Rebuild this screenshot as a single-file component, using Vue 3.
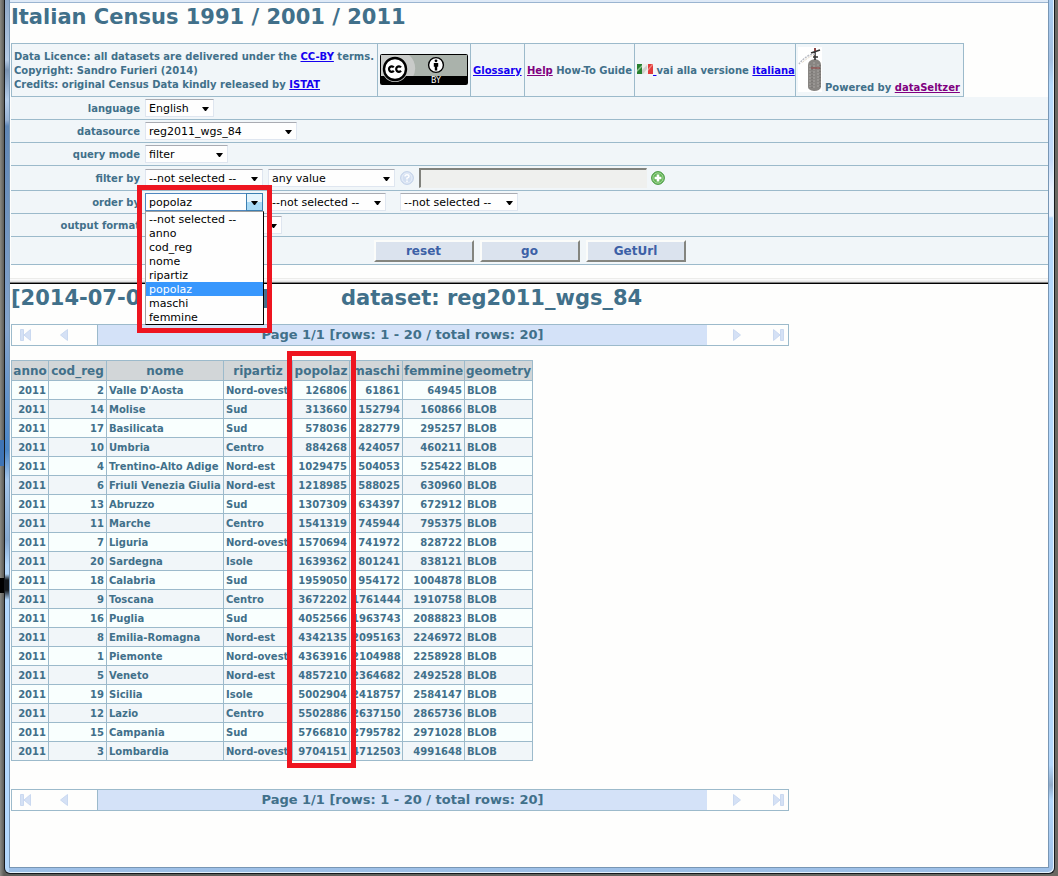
<script setup>
import { ref } from 'vue'

const fields = ['--not selected --', 'anno', 'cod_reg', 'nome', 'ripartiz', 'popolaz', 'maschi', 'femmine']
const orderBy = ref('popolaz')

const columns = ['anno', 'cod_reg', 'nome', 'ripartiz', 'popolaz', 'maschi', 'femmine', 'geometry']
const textColumns = ['nome', 'ripartiz', 'geometry']

const regions = [
  [2, "Valle D'Aosta", 'Nord-ovest', 126806, 61861, 64945],
  [14, 'Molise', 'Sud', 313660, 152794, 160866],
  [17, 'Basilicata', 'Sud', 578036, 282779, 295257],
  [10, 'Umbria', 'Centro', 884268, 424057, 460211],
  [4, 'Trentino-Alto Adige', 'Nord-est', 1029475, 504053, 525422],
  [6, 'Friuli Venezia Giulia', 'Nord-est', 1218985, 588025, 630960],
  [13, 'Abruzzo', 'Sud', 1307309, 634397, 672912],
  [11, 'Marche', 'Centro', 1541319, 745944, 795375],
  [7, 'Liguria', 'Nord-ovest', 1570694, 741972, 828722],
  [20, 'Sardegna', 'Isole', 1639362, 801241, 838121],
  [18, 'Calabria', 'Sud', 1959050, 954172, 1004878],
  [9, 'Toscana', 'Centro', 3672202, 1761444, 1910758],
  [16, 'Puglia', 'Sud', 4052566, 1963743, 2088823],
  [8, 'Emilia-Romagna', 'Nord-est', 4342135, 2095163, 2246972],
  [1, 'Piemonte', 'Nord-ovest', 4363916, 2104988, 2258928],
  [5, 'Veneto', 'Nord-est', 4857210, 2364682, 2492528],
  [19, 'Sicilia', 'Isole', 5002904, 2418757, 2584147],
  [12, 'Lazio', 'Centro', 5502886, 2637150, 2865736],
  [15, 'Campania', 'Sud', 5766810, 2795782, 2971028],
  [3, 'Lombardia', 'Nord-ovest', 9704151, 4712503, 4991648],
]
const rows = regions.map((r) => [2011, ...r, 'BLOB'])
</script>

<template>
  <div class="desktop">
    <div class="window">
      <div class="page">
        <div class="toolbar-edge"></div>
        <h1 class="title">Italian Census 1991 / 2001 / 2011</h1>

        <header class="info">
          <div class="cell licence">
            <p>Data Licence: all datasets are delivered under the <a href="#ccby">CC-BY</a> terms.</p>
            <p>Copyright: Sandro Furieri (2014)</p>
            <p>Credits: original Census Data kindly released by <a href="#istat">ISTAT</a></p>
          </div>
          <div class="cell badge-cell">
            <a href="#ccby" class="badge" aria-label="Creative Commons Attribution">
              <svg width="88" height="31" viewBox="0 0 88 31">
                <rect x="0.5" y="0.5" width="87" height="30" rx="1" fill="#aab2ab" stroke="#000" />
                <path d="M1 1H29A17 17 0 0 1 28 28H5L1 24Z" fill="#c9cbc9" />
                <path d="M1 22H87V30H1Z" fill="#000" />
                <path d="M4 22H26Q22 28 15 28T4 22Z" fill="#c9cbc9" />
                <circle cx="15" cy="15" r="11" fill="#fff" stroke="#000" stroke-width="2.4" />
                <path d="M13.8 13.4A2.7 2.7 0 1 0 13.8 16.8M21 13.4A2.7 2.7 0 1 0 21 16.8" fill="none" stroke="#000" stroke-width="2.2" />
                <circle cx="56" cy="11" r="7.4" fill="#fff" stroke="#000" stroke-width="1.4" />
                <circle cx="56" cy="6.8" r="1.4" fill="#000" />
                <path d="M53.8 9H58.2V12.8H57.2V16.4H54.8V12.8H53.8Z" fill="#000" />
                <text x="51" y="29" fill="#fff" font-size="8" font-weight="normal" font-family="DejaVu Sans, sans-serif">BY</text>
              </svg>
            </a>
          </div>
          <div class="cell glossary"><a href="#glossary">Glossary</a></div>
          <div class="cell help"><a href="#help" class="visited">Help</a>&nbsp;How-To Guide</div>
          <div class="cell italian">
            <a href="#italiana" class="flag" aria-label="italiana">
              <svg width="16" height="11" viewBox="0 0 16 11">
                <path d="M0 0H16V10H0Z" fill="#eeeeec" />
                <path d="M0 0H5V10H0Z" fill="#27802f" />
                <path d="M11 0H16V10H11Z" fill="#e23c3c" />
                <path d="M0 6L5 1V3L0 8Z" fill="#8fc08c" />
                <path d="M5 6L10 1V5L6 10H5Z" fill="#cfd0cc" />
                <path d="M11 5L15 0H16V1L11 7Z" fill="#f08880" />
              </svg>&nbsp;</a>vai alla versione&nbsp;<a href="#italiana">italiana</a>
          </div>
          <div class="cell powered">
            <svg width="24" height="45" viewBox="0 0 24 45">
              <path d="M0 0H24V45H0Z" fill="#fff" />
              <path d="M10 18Q10 13 17 12Q23 13 23 18V40Q22 44 16 44Q10 43 10 40Z" fill="#888582" />
              <path d="M12 18V40M16 15V42M20 17V40" stroke="#aaa7a4" stroke-dasharray="2 1" />
              <path d="M14 19V41M22 18V40" stroke="#6f6b69" stroke-dasharray="1 2" />
              <path d="M13 21H22" stroke="#923c3c" />
              <path d="M17 1V13M13 6L22 3M15 10H20" stroke="#333" stroke-width="1.6" fill="none" />
              <path d="M17 7Q9 7 1 17" stroke="#b9bcc4" stroke-width="1.5" fill="none" stroke-dasharray="2 1" />
              <path d="M16 8Q10 10 4 16" stroke="#d8c4a8" fill="none" stroke-dasharray="1 1" />
              <path d="M17 1V4" stroke="#b33" />
            </svg>
            <span>Powered by <a href="#dataseltzer" class="visited">dataSeltzer</a></span>
          </div>
        </header>

        <form class="query" @submit.prevent>
          <div class="row">
            <label for="language">language</label>
            <span class="picker w-language">
              <select id="language"><option>English</option></select>
              <svg width="7" height="4" viewBox="0 0 7 4"><path d="M0 0H7L4 4H3Z" /></svg>
            </span>
          </div>
          <div class="row">
            <label for="datasource">datasource</label>
            <span class="picker w-source">
              <select id="datasource"><option>reg2011_wgs_84</option></select>
              <svg width="7" height="4" viewBox="0 0 7 4"><path d="M0 0H7L4 4H3Z" /></svg>
            </span>
          </div>
          <div class="row">
            <label for="mode">query mode</label>
            <span class="picker w-mode">
              <select id="mode"><option>filter</option></select>
              <svg width="7" height="4" viewBox="0 0 7 4"><path d="M0 0H7L4 4H3Z" /></svg>
            </span>
          </div>
          <div class="row tall">
            <label for="filter">filter by</label>
            <span class="picker w-field">
              <select id="filter"><option v-for="f in fields" :key="f">{{ f }}</option></select>
              <svg width="7" height="4" viewBox="0 0 7 4"><path d="M0 0H7L4 4H3Z" /></svg>
            </span>
            <span class="picker w-value">
              <select aria-label="filter value"><option>any value</option></select>
              <svg width="7" height="4" viewBox="0 0 7 4"><path d="M0 0H7L4 4H3Z" /></svg>
            </span>
            <button type="button" class="round hint" aria-label="filter help">
              <svg width="14" height="14" viewBox="0 0 14 14">
                <circle cx="7" cy="7" r="6.4" fill="#d3dff1" stroke="#c3d2e9" />
                <circle cx="7" cy="7" r="5" fill="none" stroke="#e8eff9" />
                <path d="M5 5.6Q5 3.8 7 3.8T9 5.5Q9 6.5 7 7.2V8.4M7 9.4V11" fill="none" stroke="#fff" stroke-width="1.5" />
              </svg>
            </button>
            <input class="value" type="text" aria-label="filter text" disabled />
            <button type="button" class="round" aria-label="add filter">
              <svg width="14" height="14" viewBox="0 0 14 14">
                <circle cx="7" cy="7" r="6.4" fill="#62b455" stroke="#4a9a44" />
                <circle cx="7" cy="7" r="5.1" fill="none" stroke="#a5d79a" />
                <path d="M7 3.6V10.4M3.6 7H10.4" stroke="#fff" stroke-width="2.6" />
              </svg>
            </button>
          </div>
          <div class="row">
            <label for="order">order by</label>
            <span class="picker w-field open">
              <select id="order" v-model="orderBy"><option v-for="f in fields" :key="f">{{ f }}</option></select>
              <span class="drop"><svg width="7" height="4" viewBox="0 0 7 4"><path d="M0 0H7L4 4H3Z" /></svg></span>
              <ul class="options" role="listbox" aria-label="order by">
                <li v-for="f in fields" :key="f" role="option" :aria-selected="f === orderBy" :class="{ chosen: f === orderBy }" @click="orderBy = f">{{ f }}</li>
              </ul>
              <span class="highlight menu-highlight"></span>
            </span>
            <span class="picker w-field">
              <select aria-label="second order field"><option v-for="f in fields" :key="f">{{ f }}</option></select>
              <svg width="7" height="4" viewBox="0 0 7 4"><path d="M0 0H7L4 4H3Z" /></svg>
            </span>
            <span class="picker w-field third">
              <select aria-label="third order field"><option v-for="f in fields" :key="f">{{ f }}</option></select>
              <svg width="7" height="4" viewBox="0 0 7 4"><path d="M0 0H7L4 4H3Z" /></svg>
            </span>
          </div>
          <div class="row">
            <label for="format">output format</label>
            <span class="picker w-format">
              <select id="format"><option></option></select>
              <svg width="7" height="4" viewBox="0 0 7 4"><path d="M0 0H7L4 4H3Z" /></svg>
            </span>
          </div>
          <div class="row actions">
            <button type="reset">reset</button>
            <button type="submit">go</button>
            <button type="button">GetUrl</button>
          </div>
        </form>

        <div class="divider"></div>

        <main class="results">
          <h2 class="heading">
            <span class="stamp"><span>[2014-07-0</span><span>]</span></span>
            <span>dataset: reg2011_wgs_84</span>
          </h2>

          <template v-for="place in ['top', 'bottom']" :key="place">
            <nav class="pager" :aria-label="place + ' pages'">
              <div class="turn back">
                <button type="button" aria-label="first page">
                  <svg width="11" height="12" viewBox="0 0 11 12"><path d="M0.5 0.5H3.5V11.5H0.5Z" /><path d="M10.5 0.5V11.5L4 6Z" /></svg>
                </button>
                <button type="button" aria-label="previous page">
                  <svg width="8" height="12" viewBox="0 0 8 12"><path d="M7.5 0.5V11.5L0.5 6Z" /></svg>
                </button>
              </div>
              <div class="where">Page 1/1 [rows: 1 - 20 / total rows: 20]</div>
              <div class="turn next">
                <button type="button" aria-label="next page">
                  <svg width="8" height="12" viewBox="0 0 8 12"><path d="M0.5 0.5V11.5L7.5 6Z" /></svg>
                </button>
                <button type="button" aria-label="last page">
                  <svg width="11" height="12" viewBox="0 0 11 12"><path d="M7.5 0.5H10.5V11.5H7.5Z" /><path d="M0.5 0.5V11.5L7 6Z" /></svg>
                </button>
              </div>
            </nav>

            <div v-if="place === 'top'" class="data">
              <table>
                <colgroup><col v-for="c in columns" :key="c" :class="'c-' + c" /></colgroup>
                <thead>
                  <tr><th v-for="c in columns" :key="c" scope="col">{{ c }}</th></tr>
                </thead>
                <tbody>
                  <tr v-for="r in rows" :key="r[1]">
                    <td v-for="(v, i) in r" :key="i" :class="{ text: textColumns.includes(columns[i]) }">{{ v }}</td>
                  </tr>
                </tbody>
              </table>
              <span class="highlight column-highlight"></span>
            </div>
          </template>
        </main>
      </div>
    </div>
  </div>
</template>

<style>
body {
  margin: 0;
  background: #73726c;
}
</style>

<style scoped>
* {
  box-sizing: border-box;
}

.desktop {
  display: flex;
  min-height: 100vh;
  padding: 0 3px 2px 4px;
  background:
    linear-gradient(transparent 440px, #3f74b5 440px 466px, transparent 466px 578px, #000 578px 593px, transparent 593px) left / 4px 100% no-repeat,
    linear-gradient(90deg, #8a8a84 0, #5c5c58 4px, #6a6963 100%);
  font-family: Verdana, "DejaVu Sans", sans-serif;
  font-size: 10px;
  font-weight: bold;
  line-height: 14px;
  color: #41708a;
}

.window {
  display: flex;
  flex: 1;
  padding: 0 5px 5px 4px;
  border: 1px solid #16191d;
  border-top: 0;
  border-radius: 0 0 6px 6px;
  background:
    linear-gradient(#8fa9c8 0, #b5cae4 60px, #7a93b2 70px, #b4cdea 100px, #98b2d4 120px, #5f86b5 126px, #84a4cc 330px, #4a86c8 450px, #a5c6ea 480px, #86a9d0 540px, #b4d8fc 565px, #b4d8fc 574px, #14181c 580px, #14181c 590px, #b4d8fc 600px) left / 4px 100% no-repeat,
    linear-gradient(#a9cdf2 0, #a3bfe0 60px, #b4dafc 85px, #c4daf8 160px, #eaf2fe 190px, #eaf2fe 216px, #b4d8fc 218px, #b4d8fc 765px, #90abc8 785px, #b4d8fc 800px, #9dbfe6 100%);
  box-shadow: inset -1px -1px 0 #e6f2fc;
}

.page {
  flex: 1;
  min-width: 0;
  padding-left: 1px;
  border: 1px solid #7896b4;
  border-top: 0;
  background: #fefefd;
}

.toolbar-edge {
  height: 3px;
  margin-left: -1px;
  border-bottom: 1px solid #9ab4d0;
  background: #dfeaf7;
}

.title {
  margin: 0;
  padding: 1px 0 0;
  height: 40px;
  font-size: 21px;
  line-height: 26px;
}

p {
  margin: 0;
}

a {
  color: #1400f0;
}

a.visited {
  color: #800080;
}

/* licence, links and credits */
.info {
  display: flex;
  width: fit-content;
  height: 54px;
  border: 1px solid #9cbacb;
  background: #f1f6f9;
}

.cell {
  display: flex;
  align-items: center;
  padding: 2px 2px 0;
  white-space: nowrap;
}

.cell + .cell {
  border-left: 1px solid #9cbacb;
}

.licence {
  flex-direction: column;
  align-items: flex-start;
  justify-content: center;
  width: 365px;
}

.cell.badge-cell {
  width: 93px;
  padding: 0 2px 2px;
}

.badge,
svg {
  display: block;
}

.glossary {
  width: 54px;
}

.help {
  width: 110px;
}

.italian {
  width: 161px;
}

.flag {
  display: flex;
}

.cell.powered {
  width: 168px;
  align-items: flex-end;
  gap: 3px;
  padding: 0 2px 4px;
}

.powered span {
  margin-bottom: -3px;
}

/* query form */
.query {
  background: #f1f6f9;
}

.row {
  display: flex;
  align-items: center;
  height: 23px;
  border-bottom: 1px solid #9cbacb;
}

.row.tall {
  height: 25px;
}

label {
  width: 129px;
  margin-right: 5px;
  padding-top: 2px;
  text-align: right;
}

.picker {
  position: relative;
  display: grid;
  align-items: center;
  height: 18px;
  margin-right: 5px;
}

.picker > * {
  grid-area: 1 / 1;
}

.picker > svg {
  justify-self: end;
  margin: 2px 5px 0 0;
  pointer-events: none;
}

select {
  appearance: none;
  width: 100%;
  height: 18px;
  padding: 2px 3px 0;
  border: 1px solid #dfe6f0;
  border-top-color: #a9abb2;
  border-radius: 0;
  background: #fefefe;
  color: #000;
  font-family: inherit;
  font-size: 11px;
  line-height: 14px;
}

.w-language {
  width: 69px;
}

.w-source {
  width: 152px;
}

.w-mode {
  width: 83px;
}

.w-field {
  width: 118px;
}

.w-value {
  width: 127px;
}

.w-format {
  width: 137px;
}

.third {
  margin-left: 9px;
}

.open {
  z-index: 2;
}

.open select {
  border-color: #4f87bf;
}

.drop {
  display: grid;
  place-items: center;
  justify-self: end;
  width: 17px;
  height: 18px;
  border: 1px solid #3c7fb1;
  background: linear-gradient(#e6f5fd 50%, #a9daf5 50%);
  pointer-events: none;
}

.drop svg {
  margin-top: 2px;
}

.options {
  position: absolute;
  top: 18px;
  left: 0;
  width: 119px;
  margin: 0;
  padding: 0;
  border: 1px solid #000;
  border-top-color: #a0a0a0;
  border-left-color: #a0a0a0;
  background: #fefefe;
  color: #000;
  font-size: 11px;
  font-weight: normal;
  line-height: 16px;
  list-style: none;
}

.options li {
  height: 14px;
  padding-left: 3px;
}

.options .chosen {
  background: #3897fd;
  color: #fff;
}

.highlight {
  position: absolute;
  border: 5px solid #ee1520;
  pointer-events: none;
}

.menu-highlight {
  top: -8px;
  left: -8px;
  width: 135px;
  height: 148px;
}

.round {
  padding: 0;
  border: 0;
  background: none;
}

.hint {
  margin-right: 5px;
}

.value {
  width: 228px;
  height: 20px;
  margin-right: 4px;
  border: 1px solid #eff0ee;
  border-top: 2px solid #81827d;
  border-left: 2px solid #81827d;
  background: #eff0ee;
}

.row.actions {
  justify-content: center;
  gap: 6px;
  height: 28px;
}

.actions button {
  width: 100px;
  height: 22px;
  padding: 0;
  border: 2px solid #fbfcfa;
  border-right-color: #84857f;
  border-bottom-color: #84857f;
  background: #dbe3ee;
  color: #3c60a6;
  font-family: inherit;
  font-size: 12px;
  font-weight: bold;
}

.divider {
  height: 19px;
  margin-left: -1px;
  border-bottom: 1px solid #000;
  background: linear-gradient(#fefefd 0 13px, #ececea 13px 14px, #fafafa 14px 15px, #f0f0f0 15px 16px, #e3e3e3 16px 17px, #808080 17px 18px);
}

/* results */
.heading {
  display: flex;
  height: 40px;
  margin: 0;
  padding: 1px 0 0;
  font-size: 21px;
  line-height: 26px;
}

.stamp {
  display: flex;
  justify-content: space-between;
  width: 258px;
  margin-right: 72px;
}

.pager {
  display: flex;
  width: 778px;
  max-width: 100%;
  height: 22px;
  border: 1px solid #9cbacb;
}

.turn {
  display: flex;
  align-items: center;
}

.turn button {
  padding: 0;
  border: 0;
  background: none;
}

.turn path {
  fill: #d5e1f5;
  stroke: #cad9f0;
}

.back {
  gap: 29px;
  width: 86px;
  padding-left: 8px;
  border-right: 1px solid #9cbacb;
}

.next {
  justify-content: flex-end;
  gap: 32px;
  width: 81px;
  padding-right: 4px;
}

.where {
  flex: 1;
  background: #d4e2f8;
  font-size: 13px;
  line-height: 20px;
  text-align: center;
}

.data {
  position: relative;
  width: fit-content;
  margin: 14px 0 28px;
}

table {
  width: 522px;
  border-collapse: collapse;
  table-layout: fixed;
}

.c-anno {
  width: 37px;
}

.c-cod_reg {
  width: 58px;
}

.c-nome {
  width: 117px;
}

.c-ripartiz {
  width: 69px;
}

.c-popolaz {
  width: 57px;
}

.c-maschi {
  width: 53px;
}

.c-femmine {
  width: 62px;
}

.c-geometry {
  width: 68px;
}

th,
td {
  padding: 0 2px;
  border: 1px solid #9cbacb;
  white-space: nowrap;
}

th {
  height: 20px;
  padding: 0;
  background: #d2d6d8;
  font-size: 12px;
}

td {
  height: 19px;
  padding-top: 2px;
  text-align: right;
}

td.text {
  text-align: left;
}

tbody tr:nth-child(odd) {
  background: #f9fffe;
}

tbody tr:nth-child(even) {
  background: #f1f6f9;
}

.column-highlight {
  top: -9px;
  bottom: -7px;
  left: 276px;
  width: 69px;
}
</style>
